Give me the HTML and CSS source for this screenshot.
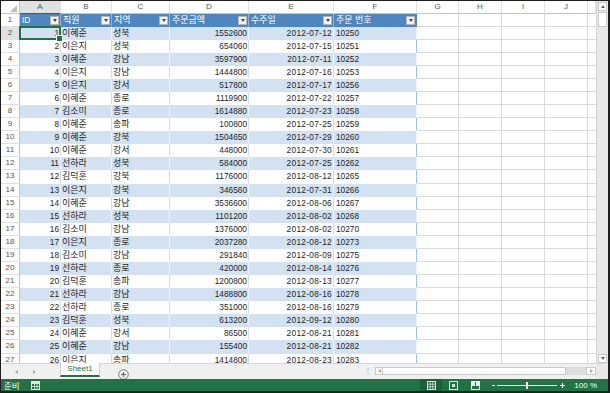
FILE: index.html
```html
<!DOCTYPE html>
<html lang="ko">

    <head>
        <meta charset="UTF-8">
        <meta name="viewport" content="width=device-width, initial-scale=1.0">
        <title>Sheet1</title>
        <link rel="stylesheet" href="styles.css">
    </head>

    <body>
        <div class="app">
            <div class="sheet">
                <div class="grid">
                    <div class="row colhdr">
                        <span class="corner"><span class="tri"></span></span>
                        <span class="ch sel">A</span>
                        <span class="ch">B</span>
                        <span class="ch">C</span>
                        <span class="ch">D</span>
                        <span class="ch">E</span>
                        <span class="ch">F</span>
                        <span class="ch">G</span>
                        <span class="ch">H</span>
                        <span class="ch">I</span>
                        <span class="ch">J</span>
                        <span class="ch k"></span>
                    </div>
                    <div class="row">
                        <span class="rh">1</span>
                        <span class="c th"><span>ID</span><span class="fbtn"></span></span>
                        <span class="c th ko"><span>직원</span><span class="fbtn"></span></span>
                        <span class="c th ko"><span>지역</span><span class="fbtn"></span></span>
                        <span class="c th ko"><span>주문금액</span><span class="fbtn"></span></span>
                        <span class="c th ko"><span>수주일</span><span class="fbtn"></span></span>
                        <span class="c th ko f"><span>주문 번호</span><span class="fbtn"></span></span>
                        <span class="c"></span><span class="c"></span><span class="c"></span><span class="c"></span><span class="c k"></span>
                    </div>
                    <div class="row band"><span class="rh sel">2</span><span class="c t num active">1</span><span class="c t ko">이혜준</span><span class="c t ko">성북</span><span class="c t num">1552600</span><span class="c t num date">2012-07-12</span><span class="c t no f">10250</span><span class="c"></span><span class="c"></span><span class="c"></span><span class="c"></span><span class="c k"></span></div>
                    <div class="row"><span class="rh">3</span><span class="c t num">2</span><span class="c t ko">이은지</span><span class="c t ko">성북</span><span class="c t num">654060</span><span class="c t num date">2012-07-15</span><span class="c t no f">10251</span><span class="c"></span><span class="c"></span><span class="c"></span><span class="c"></span><span class="c k"></span></div>
                    <div class="row band"><span class="rh">4</span><span class="c t num">3</span><span class="c t ko">이혜준</span><span class="c t ko">강남</span><span class="c t num">3597900</span><span class="c t num date">2012-07-11</span><span class="c t no f">10252</span><span class="c"></span><span class="c"></span><span class="c"></span><span class="c"></span><span class="c k"></span></div>
                    <div class="row"><span class="rh">5</span><span class="c t num">4</span><span class="c t ko">이은지</span><span class="c t ko">강남</span><span class="c t num">1444800</span><span class="c t num date">2012-07-16</span><span class="c t no f">10253</span><span class="c"></span><span class="c"></span><span class="c"></span><span class="c"></span><span class="c k"></span></div>
                    <div class="row band"><span class="rh">6</span><span class="c t num">5</span><span class="c t ko">이은지</span><span class="c t ko">강서</span><span class="c t num">517800</span><span class="c t num date">2012-07-17</span><span class="c t no f">10256</span><span class="c"></span><span class="c"></span><span class="c"></span><span class="c"></span><span class="c k"></span></div>
                    <div class="row"><span class="rh">7</span><span class="c t num">6</span><span class="c t ko">이혜준</span><span class="c t ko">종로</span><span class="c t num">1119900</span><span class="c t num date">2012-07-22</span><span class="c t no f">10257</span><span class="c"></span><span class="c"></span><span class="c"></span><span class="c"></span><span class="c k"></span></div>
                    <div class="row band"><span class="rh">8</span><span class="c t num">7</span><span class="c t ko">김소미</span><span class="c t ko">종로</span><span class="c t num">1614880</span><span class="c t num date">2012-07-23</span><span class="c t no f">10258</span><span class="c"></span><span class="c"></span><span class="c"></span><span class="c"></span><span class="c k"></span></div>
                    <div class="row"><span class="rh">9</span><span class="c t num">8</span><span class="c t ko">이혜준</span><span class="c t ko">송파</span><span class="c t num">100800</span><span class="c t num date">2012-07-25</span><span class="c t no f">10259</span><span class="c"></span><span class="c"></span><span class="c"></span><span class="c"></span><span class="c k"></span></div>
                    <div class="row band"><span class="rh">10</span><span class="c t num">9</span><span class="c t ko">이혜준</span><span class="c t ko">강북</span><span class="c t num">1504650</span><span class="c t num date">2012-07-29</span><span class="c t no f">10260</span><span class="c"></span><span class="c"></span><span class="c"></span><span class="c"></span><span class="c k"></span></div>
                    <div class="row"><span class="rh">11</span><span class="c t num">10</span><span class="c t ko">이혜준</span><span class="c t ko">강서</span><span class="c t num">448000</span><span class="c t num date">2012-07-30</span><span class="c t no f">10261</span><span class="c"></span><span class="c"></span><span class="c"></span><span class="c"></span><span class="c k"></span></div>
                    <div class="row band"><span class="rh">12</span><span class="c t num">11</span><span class="c t ko">선하라</span><span class="c t ko">성북</span><span class="c t num">584000</span><span class="c t num date">2012-07-25</span><span class="c t no f">10262</span><span class="c"></span><span class="c"></span><span class="c"></span><span class="c"></span><span class="c k"></span></div>
                    <div class="row"><span class="rh">13</span><span class="c t num">12</span><span class="c t ko">김덕훈</span><span class="c t ko">강북</span><span class="c t num">1176000</span><span class="c t num date">2012-08-12</span><span class="c t no f">10265</span><span class="c"></span><span class="c"></span><span class="c"></span><span class="c"></span><span class="c k"></span></div>
                    <div class="row band"><span class="rh">14</span><span class="c t num">13</span><span class="c t ko">이은지</span><span class="c t ko">강북</span><span class="c t num">346560</span><span class="c t num date">2012-07-31</span><span class="c t no f">10266</span><span class="c"></span><span class="c"></span><span class="c"></span><span class="c"></span><span class="c k"></span></div>
                    <div class="row"><span class="rh">15</span><span class="c t num">14</span><span class="c t ko">이혜준</span><span class="c t ko">강남</span><span class="c t num">3536600</span><span class="c t num date">2012-08-06</span><span class="c t no f">10267</span><span class="c"></span><span class="c"></span><span class="c"></span><span class="c"></span><span class="c k"></span></div>
                    <div class="row band"><span class="rh">16</span><span class="c t num">15</span><span class="c t ko">선하라</span><span class="c t ko">성북</span><span class="c t num">1101200</span><span class="c t num date">2012-08-02</span><span class="c t no f">10268</span><span class="c"></span><span class="c"></span><span class="c"></span><span class="c"></span><span class="c k"></span></div>
                    <div class="row"><span class="rh">17</span><span class="c t num">16</span><span class="c t ko">김소미</span><span class="c t ko">강남</span><span class="c t num">1376000</span><span class="c t num date">2012-08-02</span><span class="c t no f">10270</span><span class="c"></span><span class="c"></span><span class="c"></span><span class="c"></span><span class="c k"></span></div>
                    <div class="row band"><span class="rh">18</span><span class="c t num">17</span><span class="c t ko">이은지</span><span class="c t ko">종로</span><span class="c t num">2037280</span><span class="c t num date">2012-08-12</span><span class="c t no f">10273</span><span class="c"></span><span class="c"></span><span class="c"></span><span class="c"></span><span class="c k"></span></div>
                    <div class="row"><span class="rh">19</span><span class="c t num">18</span><span class="c t ko">김소미</span><span class="c t ko">강남</span><span class="c t num">291840</span><span class="c t num date">2012-08-09</span><span class="c t no f">10275</span><span class="c"></span><span class="c"></span><span class="c"></span><span class="c"></span><span class="c k"></span></div>
                    <div class="row band"><span class="rh">20</span><span class="c t num">19</span><span class="c t ko">선하라</span><span class="c t ko">종로</span><span class="c t num">420000</span><span class="c t num date">2012-08-14</span><span class="c t no f">10276</span><span class="c"></span><span class="c"></span><span class="c"></span><span class="c"></span><span class="c k"></span></div>
                    <div class="row"><span class="rh">21</span><span class="c t num">20</span><span class="c t ko">김덕훈</span><span class="c t ko">송파</span><span class="c t num">1200800</span><span class="c t num date">2012-08-13</span><span class="c t no f">10277</span><span class="c"></span><span class="c"></span><span class="c"></span><span class="c"></span><span class="c k"></span></div>
                    <div class="row band"><span class="rh">22</span><span class="c t num">21</span><span class="c t ko">선하라</span><span class="c t ko">강남</span><span class="c t num">1488800</span><span class="c t num date">2012-08-16</span><span class="c t no f">10278</span><span class="c"></span><span class="c"></span><span class="c"></span><span class="c"></span><span class="c k"></span></div>
                    <div class="row"><span class="rh">23</span><span class="c t num">22</span><span class="c t ko">선하라</span><span class="c t ko">종로</span><span class="c t num">351000</span><span class="c t num date">2012-08-16</span><span class="c t no f">10279</span><span class="c"></span><span class="c"></span><span class="c"></span><span class="c"></span><span class="c k"></span></div>
                    <div class="row band"><span class="rh">24</span><span class="c t num">23</span><span class="c t ko">김덕훈</span><span class="c t ko">성북</span><span class="c t num">613200</span><span class="c t num date">2012-09-12</span><span class="c t no f">10280</span><span class="c"></span><span class="c"></span><span class="c"></span><span class="c"></span><span class="c k"></span></div>
                    <div class="row"><span class="rh">25</span><span class="c t num">24</span><span class="c t ko">이혜준</span><span class="c t ko">강서</span><span class="c t num">86500</span><span class="c t num date">2012-08-21</span><span class="c t no f">10281</span><span class="c"></span><span class="c"></span><span class="c"></span><span class="c"></span><span class="c k"></span></div>
                    <div class="row band"><span class="rh">26</span><span class="c t num">25</span><span class="c t ko">이혜준</span><span class="c t ko">강남</span><span class="c t num">155400</span><span class="c t num date">2012-08-21</span><span class="c t no f">10282</span><span class="c"></span><span class="c"></span><span class="c"></span><span class="c"></span><span class="c k"></span></div>
                    <div class="row"><span class="rh">27</span><span class="c t num">26</span><span class="c t ko">이은지</span><span class="c t ko">송파</span><span class="c t num">1414800</span><span class="c t num date">2012-08-23</span><span class="c t no f">10283</span><span class="c"></span><span class="c"></span><span class="c"></span><span class="c"></span><span class="c k"></span></div>
                </div>
                <div class="vscroll">
                    <span class="sbtn"><span class="up"></span></span>
                    <span class="vthumb"></span>
                    <span class="vtrack"></span>
                    <span class="sbtn"><span class="down"></span></span>
                </div>
            </div>

            <div class="tabbar">
                <div class="tabnav">
                    <span class="left"></span>
                    <span class="right"></span>
                </div>
                <div class="tab">Sheet1</div>
                <div class="addsheet">
                    <svg width="11" height="11" viewBox="0 0 11 11">
                        <circle cx="5.5" cy="5.5" r="4.8" fill="none" stroke="#7a7a7a" stroke-width="1"/>
                        <path d="M5.5 3v5M3 5.5h5" stroke="#6a6a6a" stroke-width="1.2"/>
                    </svg>
                </div>
                <div class="spacer"></div>
                <div class="split">&#8942;</div>
                <div class="hscroll">
                    <span class="hbtn"><span class="left"></span></span>
                    <span class="hthumb"></span>
                    <span class="htrack"></span>
                    <span class="hbtn"><span class="right"></span></span>
                </div>
                <div class="sizebox"></div>
            </div>

            <div class="status">
                <span class="ready">준비</span>
                <svg class="macro" width="9" height="9" viewBox="0 0 9 9">
                    <rect x="0.5" y="0.5" width="8" height="8" fill="none" stroke="#dbe8df"/>
                    <rect x="0.5" y="0.5" width="8" height="2.5" fill="#dbe8df"/>
                    <path d="M3.5 3v5.5M6 3v5.5M0.5 5.5h8" stroke="#dbe8df" stroke-width="0.8"/>
                </svg>
                <div class="views">
                    <span class="vbtn on">
                        <svg width="9" height="9" viewBox="0 0 9 9">
                            <rect x="0.5" y="0.5" width="8" height="8" fill="none" stroke="#d6e6dc"/>
                            <path d="M3.2 0.5v8M5.8 0.5v8M0.5 3.2h8M0.5 5.8h8" stroke="#d6e6dc" stroke-width="0.8"/>
                        </svg>
                    </span>
                    <span class="vbtn">
                        <svg width="9" height="9" viewBox="0 0 9 9">
                            <rect x="0.5" y="0.5" width="8" height="8" fill="none" stroke="#d6e6dc"/>
                            <rect x="3" y="3" width="3" height="3" fill="#d6e6dc"/>
                        </svg>
                    </span>
                    <span class="vbtn">
                        <svg width="9" height="9" viewBox="0 0 9 9">
                            <rect x="0.5" y="0.5" width="8" height="8" fill="none" stroke="#eef5f0"/>
                            <rect x="1" y="1" width="3" height="4" fill="#eef5f0"/>
                            <rect x="5" y="1" width="3" height="4" fill="#eef5f0"/>
                        </svg>
                    </span>
                </div>
                <div class="zoom">
                    <span class="minus"></span>
                    <span class="slider"><span class="knob"></span></span>
                    <span class="plus"></span>
                </div>
                <span class="pct">100 %</span>
            </div>
        </div>
    </body>

</html>
```

FILE: styles.css
```css
* {
    margin: 0;
    padding: 0;
    box-sizing: border-box;
}

body {
    width: 610px;
    height: 393px;
    overflow: hidden;
    background-color: #1f1f1f;
    font-family: 'Liberation Sans', 'Noto Sans CJK KR', sans-serif;
}

.app {
    width: 610px;
    height: 393px;
    border-style: solid;
    border-color: #1f1f1f;
    border-width: 1px 2px 2px 1px;
    display: flex;
    flex-direction: column;
    background-color: #ffffff;
}

/* grid */

.sheet {
    height: 362px;
    display: flex;
}

.grid {
    flex: 1;
    overflow: hidden;
}

.row {
    display: grid;
    grid-template-columns: 19px 41px 51px 58px 79px 85px 83px 42px 43px 43px 43px 8px;
    height: 13.08px;
}

.colhdr {
    height: 12.5px;
}

.ch {
    border-right: 1px solid #e1e1e1;
    border-bottom: 1px solid #c4c4c4;
    font-size: 8px;
    line-height: 11px;
    text-align: center;
    color: #555555;
}

.ch.sel {
    background-color: #e1e1e1;
    color: #217346;
    border-bottom-color: #217346;
}

.corner {
    border-right: 1px solid #c4c4c4;
    border-bottom: 1px solid #c4c4c4;
    display: flex;
    align-items: flex-end;
    justify-content: flex-end;
    padding: 0 2px 1px 0;
}

.tri {
    width: 0;
    height: 0;
    border-left: 7px solid transparent;
    border-bottom: 7px solid #bdbdbd;
}

.rh {
    border-right: 1px solid #c4c4c4;
    border-bottom: 1px solid #e1e1e1;
    font-size: 8px;
    line-height: 12px;
    text-align: center;
    color: #555555;
}

.rh.sel {
    background-color: #e1e1e1;
    color: #217346;
    border-right-color: #217346;
}

.c {
    border-right: 1px solid #dadada;
    border-bottom: 1px solid #dadada;
    font-size: 8.3px;
    line-height: 12px;
    padding: 0 2px;
    white-space: nowrap;
    overflow: hidden;
    color: #1e1e1e;
}

.ko {
    font-family: 'Noto Sans CJK KR', sans-serif;
    font-size: 9px;
    padding-left: 1px;
}

.num {
    text-align: right;
    padding-right: 1px;
}

.date {
    letter-spacing: 0.3px;
}

.c.t {
    border-bottom-color: transparent;
}

.band .c.t {
    background-color: #d3e2f1;
    border-right-color: #eef3f9;
}

.c.f {
    border-right-color: #9ec1e4;
}

.c.th {
    background-color: #4f86c0;
    color: #ffffff;
    border-right-color: #8fb2d8;
    border-bottom-color: transparent;
    display: flex;
    align-items: center;
    justify-content: space-between;
    padding: 0 1px 0 2px;
}

.c.th.f {
    border-right-color: #4f86c0;
}

.fbtn {
    width: 9px;
    height: 9px;
    margin-top: 2px;
    background-color: #f4f4f4;
    border: 1px solid #b5b5b5;
    display: flex;
    align-items: center;
    justify-content: center;
    flex-shrink: 0;
}

.fbtn::after {
    content: '';
    border-left: 2.5px solid transparent;
    border-right: 2.5px solid transparent;
    border-top: 3px solid #444444;
}

.c.k {
    border-right: none;
}

.active {
    position: relative;
    overflow: visible;
}

.active::after {
    content: '';
    position: absolute;
    left: -1px;
    top: -1px;
    right: -1px;
    bottom: -1px;
    border: 2px solid #217346;
}

.active::before {
    content: '';
    position: absolute;
    right: -3px;
    bottom: -3px;
    width: 5px;
    height: 5px;
    background-color: #217346;
    border: 1px solid #ffffff;
    z-index: 2;
}

/* scrollbars */

.vscroll {
    width: 12px;
    background-color: #e8e8e8;
    border-left: 1px solid #d4d4d4;
    display: flex;
    flex-direction: column;
    padding: 1px 1px 0 1px;
}

.sbtn {
    height: 9px;
    background-color: #fdfdfd;
    border: 1px solid #c9c9c9;
    display: flex;
    align-items: center;
    justify-content: center;
}

.up {
    border-left: 2.5px solid transparent;
    border-right: 2.5px solid transparent;
    border-bottom: 3px solid #666666;
}

.down {
    border-left: 2.5px solid transparent;
    border-right: 2.5px solid transparent;
    border-top: 3px solid #666666;
}

.vthumb {
    height: 15px;
    margin-top: 1px;
    background-color: #ffffff;
    border: 1px solid #c9c9c9;
}

.vtrack {
    flex: 1;
}

.tabbar {
    height: 16px;
    display: flex;
    background-color: #f0f0f0;
    border-top: 1px solid #d6d6d6;
}

.tabnav {
    width: 59px;
    display: flex;
    align-items: center;
    padding-left: 14px;
    gap: 15px;
}

.left {
    border-top: 2.5px solid transparent;
    border-bottom: 2.5px solid transparent;
    border-right: 3px solid #a8a8a8;
}

.right {
    border-top: 2.5px solid transparent;
    border-bottom: 2.5px solid transparent;
    border-left: 3px solid #a8a8a8;
}

.tab {
    width: 40px;
    height: 14px;
    margin-top: -1px;
    background-color: #ffffff;
    border-left: 1px solid #d0d0d0;
    border-right: 1px solid #d0d0d0;
    border-bottom: 2px solid #217346;
    color: #217346;
    font-size: 8px;
    line-height: 12px;
    text-align: center;
}

.addsheet {
    padding: 2px 0 0 18px;
}

.spacer {
    flex: 1;
}

.split {
    width: 14px;
    color: #9a9a9a;
    font-size: 8px;
    line-height: 14px;
    text-align: center;
}

.hscroll {
    width: 221px;
    height: 8px;
    margin-top: 3px;
    display: flex;
}

.hbtn {
    width: 8px;
    background-color: #fdfdfd;
    border: 1px solid #c9c9c9;
    display: flex;
    align-items: center;
    justify-content: center;
}

.hbtn:last-child {
    width: 10px;
}

.hthumb {
    width: 183px;
    background-color: #ffffff;
    border: 1px solid #c9c9c9;
    border-left: none;
}

.htrack {
    flex: 1;
    background-color: #dedede;
}

.sizebox {
    width: 12px;
    background-color: #e8e8e8;
}

/* status bar */

.status {
    height: 12px;
    background-color: #217346;
    display: flex;
    align-items: center;
    color: #ffffff;
}

.ready {
    font-family: 'Noto Sans CJK KR', sans-serif;
    font-size: 8.5px;
    padding-left: 3px;
}

.macro {
    margin-left: 11px;
}

.views {
    margin-left: auto;
    display: flex;
    height: 12px;
}

.vbtn {
    width: 22px;
    display: flex;
    align-items: center;
    justify-content: center;
}

.vbtn.on {
    background-color: #1b5f3a;
}

.zoom {
    display: flex;
    align-items: center;
    margin-left: 6px;
}

.minus {
    width: 3px;
    height: 1px;
    background-color: #ffffff;
}

.slider {
    width: 60px;
    height: 1px;
    margin: 0 3px 0 2px;
    background-color: #dfeee5;
    display: flex;
    justify-content: center;
    align-items: center;
}

.knob {
    width: 2px;
    height: 7px;
    background-color: #ffffff;
}

.plus {
    width: 5px;
    height: 5px;
    background:
        linear-gradient(#ffffff, #ffffff) center / 5px 1px no-repeat,
        linear-gradient(#ffffff, #ffffff) center / 1px 5px no-repeat;
}

.pct {
    font-size: 8px;
    margin-left: 9px;
    padding-right: 11px;
}
```
